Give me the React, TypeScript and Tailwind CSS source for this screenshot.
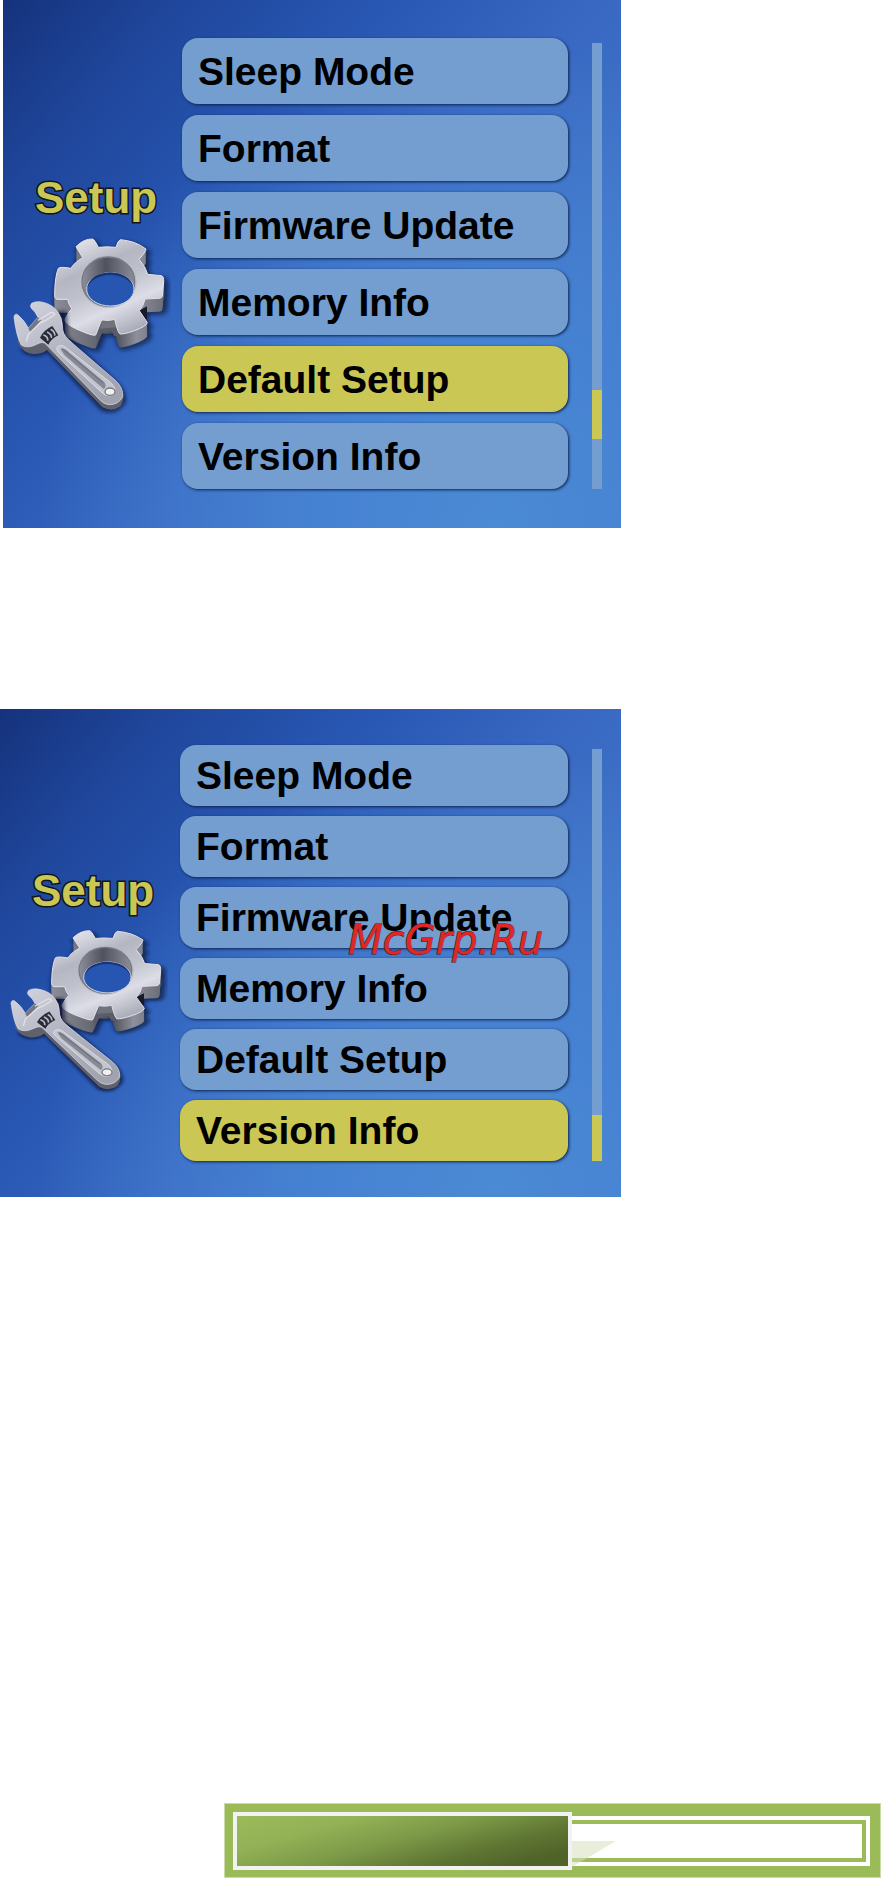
import React from "react";

const items = ["Sleep Mode", "Format", "Firmware Update", "Memory Info", "Default Setup", "Version Info"];

const gearFace =
  "M225 80 Q248 56 275 57 Q281 59 292 82 Q318 79 345 82 Q350 62 358 59 Q402 62 435 87 Q434 96 414 118 Q434 140 440 163 L482 167 Q489 170 488 186 L484 229 Q481 236 472 235 L432 237 Q429 256 415 272 L439 308 Q436 319 400 332 Q370 343 357 342 Q351 340 341 299 Q320 303 302 300 L284 345 Q278 349 240 333 Q204 319 192 303 Q190 294 212 266 Q203 254 200 238 L168 238 Q160 236 161 220 Q162 168 172 145 Q176 139 210 145 Q218 129 245 113 Z";

const extrusion = [40, 34, 28, 22, 16, 10, 5];

function SetupIcon({ id, className }: { id: string; className: string }) {
  return (
    <svg viewBox="30 45 480 540" preserveAspectRatio="none" className={className} aria-hidden="true">
      <defs>
        <linearGradient id={`${id}-face`} x1="0.2" y1="0" x2="0.7" y2="1">
          <stop offset="0" stopColor="#e6e7ee" />
          <stop offset="0.3" stopColor="#b4b6c2" />
          <stop offset="0.5" stopColor="#bfc1cc" />
          <stop offset="0.72" stopColor="#dcdde6" />
          <stop offset="1" stopColor="#a3a5b2" />
        </linearGradient>
        <linearGradient id={`${id}-side`} x1="0" y1="0" x2="1" y2="0">
          <stop offset="0" stopColor="#8a8c98" />
          <stop offset="0.35" stopColor="#686a75" />
          <stop offset="0.55" stopColor="#4a4c56" />
          <stop offset="0.75" stopColor="#8d8f9b" />
          <stop offset="1" stopColor="#6b6d79" />
        </linearGradient>
        <linearGradient id={`${id}-wall`} x1="0" y1="0" x2="1" y2="0">
          <stop offset="0" stopColor="#8c8e9b" />
          <stop offset="0.45" stopColor="#50525e" />
          <stop offset="1" stopColor="#8b8d9a" />
        </linearGradient>
        <linearGradient id={`${id}-steel`} x1="0" y1="0" x2="0.7" y2="1">
          <stop offset="0" stopColor="#d5d6e0" />
          <stop offset="0.5" stopColor="#b3b5c2" />
          <stop offset="1" stopColor="#a1a3af" />
        </linearGradient>
        <filter id={`${id}-shadow`} x="-20%" y="-20%" width="140%" height="140%">
          <feGaussianBlur stdDeviation="6" />
        </filter>
      </defs>

      <g filter={`url(#${id}-shadow)`} opacity="0.7" fill="none" stroke="#07122e" strokeWidth="16">
        <path d={gearFace} transform="translate(6 12)" />
        <path d={gearFace} transform="translate(6 40)" />
      </g>
      {extrusion.map((dy) => (
        <path key={dy} d={gearFace} transform={`translate(0 ${dy})`} fill={`url(#${id}-side)`} />
      ))}
      <path d="M414 272 L438 259 L438 296 L430 300 Z" fill="#171a2c" />
      <path d="M284 347 L302 302 L341 301 L352 348 L340 348 L332 333 L304 337 L290 368 Z" fill="#5a5c68" />
      <path d="M303 304 L340 303 L345 322 L298 326 Z" fill="#70727e" />
      <path d={gearFace} fill={`url(#${id}-face)`} stroke="#e2e3ea" strokeWidth="3" />
      <ellipse cx="322" cy="185" rx="85" ry="79" fill="#b9bbc7" />
      <ellipse cx="322" cy="185" rx="79" ry="74" fill={`url(#${id}-wall)`} stroke="#777986" strokeWidth="4" />
      <ellipse cx="328" cy="208" rx="71" ry="50" fill="#2755b2" stroke="#d4d6e0" strokeWidth="3" />
      <path d="M258 205 Q268 159 328 157 Q388 160 398 204 Q382 167 328 165 Q274 167 258 205 Z" fill="#173476" />

      <g filter={`url(#${id}-shadow)`} opacity="0.8">
        <path d="M60 390 Q95 420 140 395 L300 570 Q345 590 374 545 Q374 505 340 480 L200 350 L195 275 L160 275 Z" fill="#07102a" />
      </g>
      <path
        d="M48 342 L52 370 Q64 398 96 402 Q122 403 138 390 L304 562 Q334 578 358 559 Q370 543 366 520 L330 500 L180 330 Z"
        fill="#5f616d"
      />
      <path
        d="M39 291 Q41 279 50 284 Q69 299 82 324 L111 292 Q104 276 91 265 Q86 258 92 250 Q107 241 130 248 Q157 256 170 275 Q184 294 184 315 Q184 344 202 359 L343 481 Q368 504 365 530 Q353 555 323 554 Q308 552 296 539 L137 375 Q127 361 107 373 Q79 387 61 375 Q46 350 39 291 Z"
        fill={`url(#${id}-steel)`}
        stroke="#e3e4eb"
        strokeWidth="2"
      />
      <path d="M82 324 L111 292 L121 300 L88 338 Z" fill="#747684" />
      <path d="M111 301 L149 278 Q158 276 162 283 Q139 301 117 309 L82 343 L76 365" fill="none" stroke="#e0e1e9" strokeWidth="4" />
      <path d="M117 353 Q127 331 154 318 L172 346 Q151 356 142 374 Z" fill="#292b39" />
      <path d="M127 345 Q142 350 140 362 M138 336 Q153 343 151 354 M149 328 Q163 336 161 347" fill="none" stroke="#b9bbc7" strokeWidth="5" />
      <path d="M168 382 Q180 370 196 384 L329 488 Q349 507 338 524 Q321 533 303 518 L175 400 Q164 390 168 382 Z" fill="#c3c5cf" stroke="#dcdde5" strokeWidth="3" />
      <path d="M178 386 Q190 383 205 398 L310 487 Q319 500 308 507 L190 405 Z" fill="#878996" />
      <path d="M184 386 L307 489" fill="none" stroke="#747682" strokeWidth="4" />
      <ellipse cx="327" cy="515" rx="15" ry="11" fill="#eff0ef" stroke="#777985" strokeWidth="4" />
    </svg>
  );
}

type ScreenProps = {
  id: string;
  selected: string;
  panel: string;
  side: string;
  icon: string;
  list: string;
  item: string;
  track: string;
  thumb: string;
};

function SetupScreen({ id, selected, panel, side, icon, list, item, track, thumb }: ScreenProps) {
  return (
    <section
      className={`flex items-start bg-[radial-gradient(ellipse_at_80%_100%,#4b8ad4_0%,#4682d2_25%,#3c6fc800_65%),linear-gradient(130deg,#15327c_0%,#1f469b_16%,#2857b3_36%,#3868c2_56%,#4275c8_76%,#4a80cc_100%)] ${panel}`}
    >
      <div className={`flex shrink-0 flex-col ${side}`}>
        <h2 className="ml-8 text-[44px] leading-[48px] font-bold text-[#cbc755] [-webkit-text-stroke:3px_#10151c] [paint-order:stroke_fill]">
          Setup
        </h2>
        <SetupIcon id={id} className={icon} />
      </div>
      <nav className={`flex min-w-0 flex-1 flex-col ${list}`}>
        {items.map((name) => (
          <button
            key={name}
            type="button"
            className={`flex items-center rounded-2xl pl-4 text-left text-[39px] leading-none font-bold whitespace-nowrap text-black shadow-[1px_1px_3px_#0b2350] ${item} ${
              name === selected ? "bg-[#cbc755]" : "bg-[#739ecf]"
            }`}
          >
            {name}
          </button>
        ))}
      </nav>
      <div className={`mr-[19px] ml-6 flex w-[10px] shrink-0 flex-col justify-end bg-[#739ecf] ${track}`}>
        <div className={`bg-[#cbc755] ${thumb}`} />
      </div>
    </section>
  );
}

export default function App() {
  return (
    <div className="flex min-h-screen flex-col bg-white font-['Liberation_Sans',Arial,sans-serif]">
      <main>
        <div className="w-full max-w-[621px] pl-[3px]">
          <SetupScreen
            id="default-setup"
            selected="Default Setup"
            panel="h-[528px]"
            side="w-[179px] pt-[174px]"
            icon="mt-[13px] ml-2 h-[180px] w-[160px]"
            list="gap-[11px] pt-[38px]"
            item="h-[66px]"
            track="mt-[43px] h-[446px] pb-[50px]"
            thumb="h-[49px]"
          />
        </div>
        <div className="relative mt-[181px] w-full max-w-[621px]">
          <SetupScreen
            id="version-info"
            selected="Version Info"
            panel="h-[488px]"
            side="w-[180px] pt-[158px]"
            icon="mt-3 ml-2 h-[167px] w-[160px]"
            list="gap-[10px] pt-[36px]"
            item="h-[61px]"
            track="mt-[40px] h-[412px]"
            thumb="h-[46px]"
          />
          <span className="absolute top-[207px] left-[348px] font-['DejaVu_Sans',sans-serif] text-[40px] leading-[48px] text-[#e02725] italic [-webkit-text-stroke:1px_#401a20] [paint-order:stroke_fill]">
            McGrp.Ru
          </span>
        </div>
      </main>
      <footer className="mt-auto ml-[224px] flex border border-[#c9dba6] bg-[#9bbb59] pt-2 pr-[10px] pb-[7px] pl-2">
        <div className="h-[58px] w-[339px] shrink-0 border-4 border-[#f2f2f2] bg-[linear-gradient(165deg,#9bbb59_0%,#93b156_25%,#7d9a48_48%,#5e7532_72%,#4f6228_90%)]" />
        <div className="relative my-1 min-w-0 flex-1 border-y-4 border-r-4 border-white">
          <div className="h-full border-y-4 border-r-4 border-[#9bbb59] bg-white" />
          <svg viewBox="0 0 44 26" className="absolute top-[21px] left-0 h-[26px] w-[44px]" aria-hidden="true">
            <path d="M0 0 H44 L0 26 Z" fill="#d7e0bd" fillOpacity="0.55" />
          </svg>
        </div>
      </footer>
    </div>
  );
}
